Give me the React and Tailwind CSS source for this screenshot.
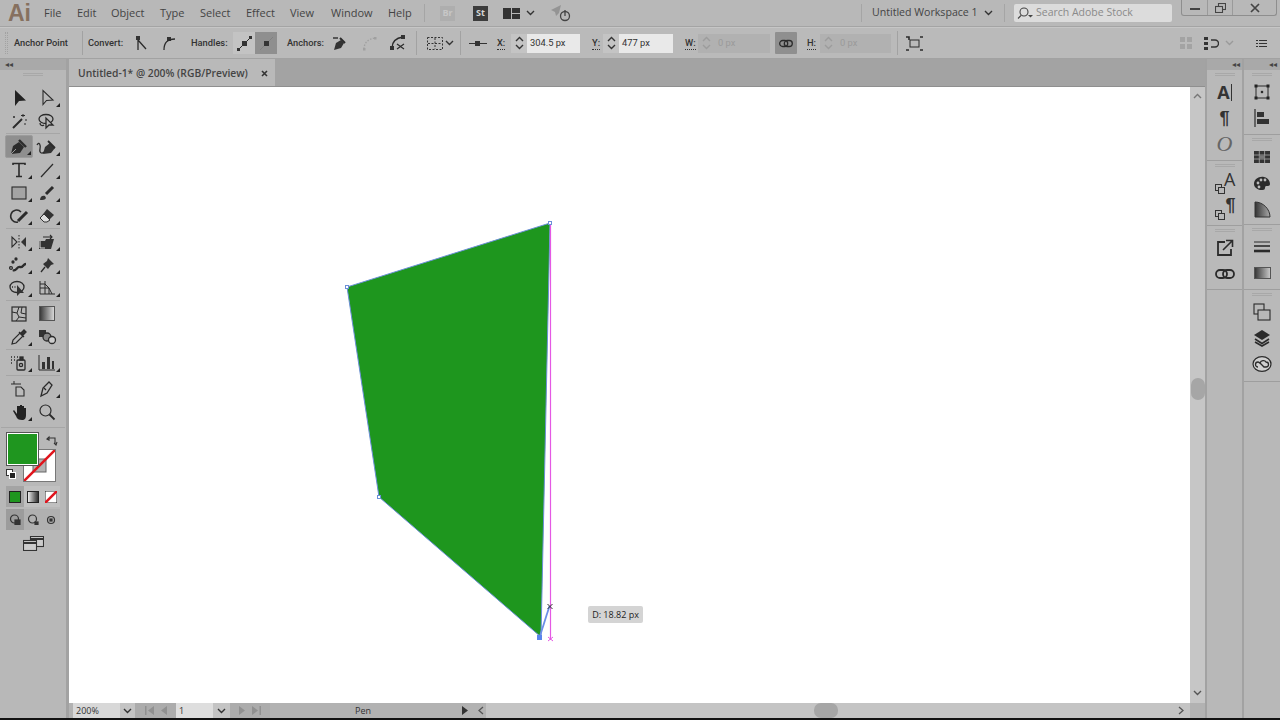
import React from "react";

const S = ({ w = 20, h = 20, vb, children, className = "" }) => (
  <svg width={w} height={h} viewBox={vb || `0 0 ${w} ${h}`} fill="none" stroke="#2b2b2b" strokeWidth="1.3" className={"block shrink-0 " + className}>
    {children}
  </svg>
);
const Chev = ({ c = "#333", w = 9, up = false }) => (
  <svg width={w} height="6" viewBox="0 0 9 6" fill="none" stroke={c} strokeWidth="1.4" className="block shrink-0">
    <path d={up ? "M1 5l3.5-3.5L8 5" : "M1 1l3.5 3.5L8 1"} />
  </svg>
);
const Corner = () => <span className="absolute right-[1px] bottom-[2px] w-0 h-0 border-l-[4px] border-l-transparent border-b-[4px] border-b-[#222]" />;
const Tool = ({ children, corner = true, active = false }) => (
  <div className={"relative w-[28px] h-[23px] flex items-center justify-center " + (active ? "bg-[#8f8f8f] rounded-[2px] border border-[#9c9c9c]" : "")}>
    {children}
    {corner && <Corner />}
  </div>
);
const Row = ({ children }) => <div className="flex justify-center gap-0">{children}</div>;
const Sep = () => <div className="mx-[1px] my-[1px] h-px bg-[#a6a6a6]" />;

const Pen = ({ c = "#2b2b2b" }) => (
  <g>
    <path d="M2 17l2-8 6-4 5 5-4 6-9 1z" fill={c} stroke="none" />
    <path d="M10 3l7 7" stroke={c} strokeWidth="2.4" />
    <path d="M2 17l5-5" stroke="#9a9a9a" strokeWidth="1" />
  </g>
);

const leftTools = [
  [
    [<S w={18} h={18}><path d="M5 1v16l4-5 7-.5z" fill="#222" stroke="none" /></S>, false],
    [<S w={18} h={18}><path d="M5 1.5v14l3.5-4 6.5-.5z" strokeWidth="1.1" /></S>, true],
  ],
  [
    [<S w={18} h={18}><path d="M3 16L12 7" strokeWidth="2" /><path d="M13 2v3M11 3.5h4M16 7v2M4 4v2M3 5h2M15 11v2" strokeWidth="1" /></S>, false],
    [<S w={20} h={18}><ellipse cx="9" cy="7" rx="7" ry="4.5" /><path d="M3 11c0 3 3 3 4 2" /><path d="M9 6v10l3-3 4 0z" fill="#b8b8b8" /></S>, false],
  ],
  "sep",
  [
    [<S w={20} h={20}><Pen /></S>, true, true],
    [<S w={22} h={20}><path d="M7 17l2-7 5-4 5 5-4 5-8 1z" fill="#333" stroke="none" /><path d="M12 4l7 7" strokeWidth="1.8" /><path d="M1 8c2-4 4 0 3 4s2 5 4 3" /></S>, true],
  ],
  [
    [<S w={18} h={18}><path d="M3 4V2.5h12V4M9 2.5v13M6 15.5h6" strokeWidth="1.6" /></S>, true],
    [<S w={18} h={18}><path d="M3 16L15 3" strokeWidth="1.2" /></S>, true],
  ],
  [
    [<S w={18} h={18}><rect x="2" y="3" width="14" height="12" fill="#a4a4a4" strokeWidth="1.1" /></S>, true],
    [<S w={18} h={18}><path d="M2 16c0-4 3-5 5-4l1 2c-1 2-3 2-6 2z" fill="#333" stroke="none" /><path d="M8 10l7-7" strokeWidth="3" /></S>, true],
  ],
  [
    [<S w={22} h={18}><path d="M13 5a6 6 0 1 0-3 10" strokeWidth="1.5" /><path d="M10 14l9-9" strokeWidth="3" /></S>, true],
    [<S w={20} h={18}><path d="M10 2l7 6-7 7H7L3 11z" fill="#333" stroke="none" /><path d="M3 11l4-4 6 6-3 2H7z" fill="#ddd" stroke="#333" strokeWidth="1" /></S>, true],
  ],
  "sep",
  [
    [<S w={20} h={18}><path d="M3 4v10l5-5z" strokeWidth="1.1" /><path d="M17 4v10l-5-5z" fill="#333" stroke="none" /><path d="M10 2v15" strokeDasharray="1.5 1.5" strokeWidth="1" /></S>, true],
    [<S w={20} h={18}><path d="M2 8h6l1-2h8l-3 10H2z" fill="#333" stroke="none" /><path d="M3 8v7h5" stroke="#ddd" strokeWidth="1" /><path d="M6 4h9M13 2l2 2-2 2" strokeWidth="1.1" /></S>, true],
  ],
  [
    [<S w={20} h={18}><path d="M4 14c3 2 4-4 7-3s3-3 6-3" strokeWidth="2.4" /><circle cx="4" cy="6" r="1" fill="#222" /><circle cx="7" cy="3" r="1" fill="#222" /><circle cx="2" cy="12" r="1.4" /></S>, true],
    [<S w={18} h={18}><path d="M10 2l6 6-3 1-3 4-5-5 4-3z" fill="#333" stroke="none" /><path d="M7 11l-4 5" /></S>, true],
  ],
  [
    [<S w={22} h={18}><ellipse cx="9" cy="8" rx="7" ry="5.5" /><path d="M9 6v11l3-3h4z" fill="#333" stroke="none" /><path d="M4 8h1M6.5 8h1" /></S>, true],
    [<S w={20} h={18}><path d="M3 2v13h15M3 5h5l4 4 3 6M8 2v13M3 9h9M12 9v6" strokeWidth="1" /></S>, true],
  ],
  "sep",
  [
    [<S w={18} h={18}><rect x="2" y="2" width="14" height="14" strokeWidth="1.2" /><path d="M2 7l5 1 2-6M7 8l2 4 7 1M9 12l-3 4M12 2l-1 6 5 1" strokeWidth="1" /></S>, false],
    [<svg width="16" height="15" className="block"><defs><linearGradient id="g1" x1="0" x2="1"><stop offset="0" stopColor="#333" /><stop offset="1" stopColor="#ddd" /></linearGradient></defs><rect x=".5" y=".5" width="15" height="14" fill="url(#g1)" stroke="#555" /></svg>, false],
  ],
  [
    [<S w={18} h={18}><path d="M2 16l1-4 7-7 3 3-7 7z" strokeWidth="1.2" /><path d="M9 4l5 5M11 5l3-3 2 2-3 3z" fill="#333" /></S>, true],
    [<S w={20} h={18}><rect x="2" y="2" width="7" height="7" fill="#333" stroke="none" /><circle cx="10" cy="9" r="4" fill="#888" /><circle cx="15" cy="12" r="3.5" fill="#ccc" /></S>, false],
  ],
  "sep",
  [
    [<S w={20} h={20}><path d="M2 4h1M5 4h1M2 7h1M5 7h1M8 4h1M2 10h1" strokeWidth="1.6" /><rect x="8" y="7" width="8" height="10" rx="1" strokeWidth="1.3" /><rect x="11" y="4" width="3" height="3" fill="#333" /><circle cx="12" cy="12" r="1.6" /></S>, true],
    [<S w={20} h={20}><path d="M2 2v15h16" strokeWidth="1" /><path d="M5 16V9h3v7zM10 16V4h3v12zM15 16V8h2v8z" fill="#333" stroke="none" /></S>, true],
  ],
  "sep",
  [
    [<S w={20} h={20}><path d="M2 5h10M5 2v3" strokeWidth="1" /><path d="M7 8h5l3 3v6H7z" fill="#bbb" strokeWidth="1.1" /></S>, false],
    [<S w={20} h={20}><path d="M4 17l2-8 6-6 3 3-5 8z" strokeWidth="1.3" /><path d="M7 9l2 2" /></S>, true],
  ],
  [
    [<S w={20} h={20}><path d="M4 9l3 5c1 3 3 4 6 4s4-2 4-5V6l-2 0v4-6h-2v6V3h-2v7V4H8v8L5 8z" fill="#222" stroke="none" /></S>, true],
    [<S w={18} h={18}><circle cx="7.5" cy="7.5" r="5.5" strokeWidth="1.2" /><path d="M11.5 11.5L16.5 16.5" strokeWidth="1.8" /></S>, false],
  ],
];

const rI = {
  A: <span className="font-['Open_Sans',sans-serif] font-bold text-[18px] leading-none text-[#333] flex items-center">A<span className="ml-[1px] w-px h-[17px] bg-[#333]" /></span>,
  P: <span className="font-['Liberation_Sans',sans-serif] font-bold text-[18px] leading-none text-[#333]">¶</span>,
  O: <span className="font-['Liberation_Serif',serif] italic text-[22px] leading-none text-[#666]">O</span>,
  SA: <span className="relative w-[20px] h-[20px] block"><span className="absolute right-[-1px] top-[-3px] font-['Open_Sans',sans-serif] text-[18px] leading-none text-[#333]">A</span><span className="absolute left-0 bottom-[2px] w-[7px] h-[7px] border border-[#333]" /><span className="absolute left-[3px] bottom-[-1px] w-[7px] h-[7px] border border-[#333] bg-[#b8b8b8]" /></span>,
  SP: <span className="relative w-[20px] h-[20px] block"><span className="absolute right-[-1px] top-[-3px] font-['Liberation_Sans',sans-serif] font-bold text-[18px] leading-none text-[#333]">¶</span><span className="absolute left-0 bottom-[2px] w-[7px] h-[7px] border border-[#333]" /><span className="absolute left-[3px] bottom-[-1px] w-[7px] h-[7px] border border-[#333] bg-[#b8b8b8]" /></span>,
  Ext: <S w={20} h={20}><path d="M10 4H3v13h13v-6" strokeWidth="1.8" /><path d="M8 12l9-9M11 2.5h6.5V9" strokeWidth="1.6" /></S>,
  Link: <S w={20} h={14}><rect x="1" y="3" width="11" height="8" rx="4" strokeWidth="1.8" /><rect x="8" y="3" width="11" height="8" rx="4" strokeWidth="1.8" /></S>,
  Tr: <S w={18} h={18}><rect x="3" y="3" width="12" height="12" strokeWidth="1" /><path d="M1.5 1.5h3v3h-3zM13.5 1.5h3v3h-3zM1.5 13.5h3v3h-3zM13.5 13.5h3v3h-3z" fill="#222" stroke="none" /><rect x="8.5" y="8.5" width="1" height="1" fill="#222" /></S>,
  Al: <S w={18} h={20}><path d="M2 1v18" strokeWidth="1.2" /><path d="M4 4h7v5H4zM4 11h12v5H4z" fill="#333" stroke="none" /></S>,
  Sw: <S w={16} h={12}><path d="M0 0h16v12H0z" fill="#333" stroke="none" /><path d="M5.3 0v12M10.6 0v12M0 4h16M0 8h16" stroke="#aaa" strokeWidth=".8" /><rect x="5.5" y="4.3" width="5" height="3.5" fill="#777" stroke="none" /></S>,
  Pal: <S w={18} h={16}><path d="M1 9c0-5 5-8 10-7s6 5 6 7-2 2-3 2-2 0-2 2-2 2-4 2-7-2-7-6z" fill="#2b2b2b" stroke="none" /><circle cx="5" cy="8" r="1.4" fill="#bbb" stroke="none" /><circle cx="8" cy="5" r="1.4" fill="#bbb" stroke="none" /><circle cx="12" cy="5" r="1.4" fill="#bbb" stroke="none" /><circle cx="6" cy="12" r="1.4" fill="#bbb" stroke="none" /></S>,
  Ap: <svg width="17" height="17" className="block"><defs><linearGradient id="g2" x1="0" x2="1"><stop offset="0" stopColor="#333" /><stop offset="1" stopColor="#aaa" /></linearGradient></defs><path d="M1 1c8 0 15 7 15 15H1z" fill="url(#g2)" stroke="#333" /></svg>,
  Lines: <S w={18} h={14}><path d="M1 2h16" strokeWidth="1" /><path d="M1 6h16" strokeWidth="1.6" /><path d="M1 11h16" strokeWidth="2.6" /></S>,
  Grad: <svg width="17" height="12" className="block"><defs><linearGradient id="g3" x1="0" x2="1"><stop offset="0" stopColor="#333" /><stop offset="1" stopColor="#ccc" /></linearGradient></defs><rect x=".5" y=".5" width="16" height="11" fill="url(#g3)" stroke="#555" /></svg>,
  Cop: <S w={18} h={18}><rect x="1" y="1" width="10" height="10" strokeWidth="1.1" /><rect x="5" y="7" width="12" height="10" fill="#b8b8b8" strokeWidth="1.1" /></S>,
  Lay: <S w={18} h={18}><path d="M9 1l8 5-8 5-8-5z" fill="#2b2b2b" stroke="none" /><path d="M2 10l7 4.5L16 10M2 13l7 4 7-4" strokeWidth="1.6" /></S>,
  CC: <S w={20} h={16}><ellipse cx="10" cy="8" rx="9" ry="7.3" fill="#d0d0d0" strokeWidth="1.2" /><path d="M6 11a2.5 2.5 0 0 1 0-5c1 0 2 1 4 3l2 2h2a2.5 2.5 0 0 0 0-5c-1-2-5-2-6 1" strokeWidth="1.3" /></S>,
};

const RIcon = ({ children }) => <div className="flex items-center justify-center w-full h-[26px]">{children}</div>;
const Grip = () => <div className="mx-auto mt-[3px] w-[20px] h-[3px] border-y border-[#a2a2a2] opacity-70" />;
const Panel = ({ h, items }) => (
  <div className="bg-[#b9b9b9] border-b border-[#9e9e9e] shrink-0" style={{ height: h }}>
    <Grip />
    <div className="mt-[3px] flex flex-col">{items.map((it, i) => <RIcon key={i}>{it}</RIcon>)}</div>
  </div>
);

const Lbl = ({ children, ml = 0, w }) => (
  <span className="text-[9.3px] font-medium font-['Roboto',sans-serif] text-[#333] whitespace-nowrap shrink-0" style={{ marginLeft: ml, width: w }}>{children}</span>
);
const VSep = ({ ml, h = 28 }) => <span className="w-px bg-[#a2a2a2] shrink-0" style={{ marginLeft: ml, height: h }} />;
const Slot = ({ ml = 0, w = 20, children, cls = "" }) => (
  <span className={"flex items-center justify-center shrink-0 " + cls} style={{ marginLeft: ml, width: w }}>{children}</span>
);
const Spin = ({ fade }) => (
  <span className={"w-[16px] h-[19px] flex flex-col items-center justify-center gap-[2px] shrink-0 " + (fade ? "" : "bg-[#c4c4c4]")}>
    <Chev c={fade ? "#9c9c9c" : "#333"} up />
    <Chev c={fade ? "#9c9c9c" : "#333"} />
  </span>
);
const Field = ({ w, val }) => (
  <span className="flex items-center h-[19px] bg-[#e9e9e9] text-[9.3px] font-['Roboto',sans-serif] text-[#333] pl-[3px] shrink-0" style={{ width: w }}>{val}</span>
);
const Dis = ({ w }) => (
  <span className="flex items-center h-[19px] bg-[#b1b1b1] shrink-0" style={{ width: w }}>
    <Spin fade />
    <span className="text-[9.3px] font-['Roboto',sans-serif] text-[#9a9a9a] ml-[4px]">0 px</span>
  </span>
);
const UL = ({ children, ml, w }) => (
  <span className="text-[9.3px] font-medium font-['Roboto',sans-serif] text-[#333] shrink-0 flex" style={{ marginLeft: ml, width: w }}>
    <span className="border-b border-dotted border-[#333] leading-[12px]">{children}</span>
  </span>
);

export default function App() {
  return (
    <div className="w-[1280px] h-[720px] overflow-hidden flex flex-col bg-[#b8b8b8] font-['Open_Sans',sans-serif] text-[#3a3a3a]">
      {/* menu */}
      <div className="h-[27px] shrink-0 flex items-start border-b border-[#a4a4a4] relative">
        <span className="w-[44px] pl-[8px] h-[26px] flex items-center text-[23px] font-bold text-[#86705f] leading-none font-['Liberation_Sans',sans-serif]">Ai</span>
        <div className="flex items-center h-[26px] text-[11px] text-[#444]">
          <span className="w-[33px]">File</span>
          <span className="w-[34px]">Edit</span>
          <span className="w-[49px]">Object</span>
          <span className="w-[40px]">Type</span>
          <span className="w-[46px]">Select</span>
          <span className="w-[44px]">Effect</span>
          <span className="w-[41px]">View</span>
          <span className="w-[57px]">Window</span>
          <span className="w-[36px]">Help</span>
        </div>
        <div className="flex items-center h-[26px]">
          <span className="w-px h-[18px] bg-[#a5a5a5]" />
          <span className="ml-[15px] w-[15px] h-[15px] bg-[#aeaeae] text-[#c7c7c7] text-[9px] font-bold flex items-center justify-center">Br</span>
          <span className="ml-[18px] w-[15px] h-[15px] bg-[#3c3c3c] text-[#d6d6d6] text-[9px] font-bold flex items-center justify-center">St</span>
          <svg width="17" height="11" className="ml-[15px] block"><rect width="8" height="11" fill="#333" /><rect x="9" width="8" height="5" fill="#333" /><rect x="9" y="6" width="8" height="5" fill="#333" /></svg>
          <span className="ml-[6px]"><Chev /></span>
          <svg width="21" height="18" viewBox="0 0 21 18" className="ml-[15px] block" fill="none"><path d="M1 6l10-5-2 8-3 3-1-4z" fill="#949494" /><circle cx="15" cy="12" r="4.5" stroke="#444" strokeWidth="1.3" /><path d="M15 6v6" stroke="#444" strokeWidth="1.3" /></svg>
        </div>
        <div className="ml-auto flex items-center h-[26px]">
          <span className="w-px h-[18px] bg-[#a5a5a5]" />
          <span className="ml-[10px] text-[10.6px] text-[#444] w-[110px]">Untitled Workspace 1</span>
          <span className="ml-[2px]"><Chev /></span>
          <span className="ml-[11px] w-px h-[18px] bg-[#a5a5a5]" />
          <div className="ml-[9px] mb-[1px] w-[158px] h-[18px] bg-[#dcdcdc] rounded-[2px] flex items-center pl-[3px] text-[10.5px] text-[#8a8a8a]">
            <svg width="16" height="12" viewBox="0 0 16 12" fill="none" stroke="#444" strokeWidth="1.1" className="block"><circle cx="7" cy="5" r="4" /><path d="M4 8.5L1 11.5" /><path d="M11 8l2.5 2.5L16 8z" fill="#444" stroke="none" /></svg>
            <span className="ml-[3px]">Search Adobe Stock</span>
          </div>
        </div>
        <div className="ml-[9px] mr-[3px] h-[16px] flex border border-t-0 border-[#8e8e8e] rounded-b-[3px]">
          <span className="w-[26px] flex items-center justify-center border-r border-[#9a9a9a]"><span className="block w-[10px] h-[2px] mt-[3px] bg-[#444]" /></span>
          <span className="w-[25px] flex items-center justify-center border-r border-[#9a9a9a]"><svg width="11" height="10" fill="none" stroke="#444" strokeWidth="1.1" className="block"><rect x="3.5" y=".5" width="7" height="6" /><rect x=".5" y="3.5" width="7" height="6" fill="#b8b8b8" /></svg></span>
          <span className="w-[43px] flex items-center justify-center"><svg width="10" height="10" stroke="#444" strokeWidth="1.7" className="block"><path d="M1 1l8 8M9 1l-8 8" /></svg></span>
        </div>
      </div>

      {/* control bar */}
      <div className="h-[32px] shrink-0 flex items-center border-t border-[#c6c6c6] border-b border-b-[#a2a2a2] bg-[#bababa]">
        <span className="ml-[5px] w-[3px] h-[22px] border-x border-dotted border-[#a2a2a2] shrink-0" />
        <Lbl ml={6} w={68}>Anchor Point</Lbl>
        <VSep ml={0} h={24} />
        <Lbl ml={5} w={36}>Convert:</Lbl>
        <Slot ml={7} w={20}>
          <S w={14} h={16}><rect x="2" y="1" width="4" height="4" fill="#333" stroke="none" /><path d="M4 5v10M4 5l8 9" /></S>
        </Slot>
        <Slot ml={8} w={20}>
          <S w={14} h={16}><rect x="5" y="2" width="4" height="4" fill="#333" stroke="none" /><path d="M2 15c0-7 3-11 11-11" /></S>
        </Slot>
        <Lbl ml={12} w={37}>Handles:</Lbl>
        <span className="ml-[5px] flex h-[22px] shrink-0 bg-[#c3c3c3]">
          <span className="w-[22px] flex items-center justify-center"><S w={15} h={15}><path d="M1 14L14 1" strokeWidth="1" /><rect x="5" y="5" width="5" height="5" fill="#333" stroke="none" /><rect x="0" y="12" width="3" height="3" fill="#333" stroke="none" /><rect x="12" y="0" width="3" height="3" fill="#333" stroke="none" /></S></span>
          <span className="w-[22px] flex items-center justify-center bg-[#8f8f8f]"><S w={15} h={15}><path d="M1 14L14 1" strokeWidth=".6" stroke="#777" /><rect x="5" y="5" width="5" height="5" fill="#333" stroke="none" /></S></span>
        </span>
        <Lbl ml={10} w={36}>Anchors:</Lbl>
        <Slot ml={6} w={20}><S w={17} h={17}><path d="M3 15l2-7 5-3 3 3-3 5z" fill="#333" stroke="none" /><path d="M9 3l5 5" strokeWidth="2" /><path d="M2 3h5" strokeWidth="1.4" /></S></Slot>
        <Slot ml={10} w={20}><S w={15} h={15}><path d="M2 13c0-6 4-10 11-11" stroke="#a0a0a0" strokeDasharray="1.5 1.5" /><rect x="1" y="12" width="2.5" height="2.5" fill="#a0a0a0" stroke="none" /><rect x="12" y="1" width="2.5" height="2.5" fill="#a0a0a0" stroke="none" /></S></Slot>
        <Slot ml={9} w={20}><S w={16} h={16}><path d="M2 13c0-6 4-10 11-11" /><rect x="0" y="11" width="4" height="4" fill="#333" stroke="none" /><rect x="11" y="0" width="4" height="4" fill="#333" stroke="none" /><path d="M7 9l7 5M7 14l7-5" strokeWidth="1.2" /></S></Slot>
        <VSep ml={8} h={24} />
        <Slot ml={10} w={16}><svg width="16" height="13" fill="none" stroke="#333" strokeDasharray="2 1.5" className="block"><rect x=".5" y=".5" width="15" height="12" /><path d="M8 1v11M1 6.5h14" /></svg></Slot>
        <span className="ml-[2px]"><Chev /></span>
        <VSep ml={6} h={24} />
        <Slot ml={8} w={18}><svg width="18" height="7" className="block"><path d="M0 3.5h18" stroke="#333" /><rect x="6" y="1" width="5" height="5" fill="#333" /></svg></Slot>
        <UL ml={10} w={14}>X:</UL>
        <Spin />
        <Field w={53} val="304.5 px" />
        <UL ml={12} w={11}>Y:</UL>
        <Spin />
        <Field w={54} val="477 px" />
        <UL ml={12} w={13}>W:</UL>
        <Dis w={72} />
        <span className="ml-[5px] w-[22px] h-[22px] bg-[#8f8f8f] rounded-[1px] flex items-center justify-center shrink-0"><S w={14} h={9}><rect x=".7" y="1.5" width="8" height="6" rx="3" strokeWidth="1.3" /><rect x="5.3" y="1.5" width="8" height="6" rx="3" strokeWidth="1.3" /></S></span>
        <UL ml={10} w={13}>H:</UL>
        <Dis w={71} />
        <VSep ml={6} h={24} />
        <Slot ml={7} w={18}><S w={17} h={15}><rect x="4" y="4" width="9" height="7" strokeWidth="1" /><path d="M0 1h3v3M14 1h3M0 14h3M14 14h3" strokeWidth="1.6" /></S></Slot>
        <span className="ml-auto flex items-center">
          <svg width="12" height="12" className="block" fill="#a3a3a3"><rect width="5" height="5" /><rect x="7" width="5" height="5" /><rect y="7" width="5" height="5" /><rect x="7" y="7" width="5" height="5" /></svg>
          <svg width="15" height="13" className="block ml-[12px]" fill="none" stroke="#333" strokeWidth="1.4"><path d="M0 0h4v3H0zM0 5h4v3H0zM0 10h4v3H0z" fill="#333" stroke="none" /><path d="M7 3h4a3.5 3.5 0 0 1 0 7H7" /></svg>
          <span className="ml-[6px]"><Chev c="#9a9a9a" /></span>
          <svg width="11" height="9" className="block ml-[22px] mr-[13px]" stroke="#333"><path d="M3 1.5h8M3 4.5h8M3 7.5h8" /><path d="M0 1.5h2M0 4.5h2M0 7.5h2" /></svg>
        </span>
      </div>

      {/* main */}
      <div className="flex-1 min-h-0 flex">
        {/* left tools */}
        <div className="w-[66px] shrink-0 flex flex-col bg-[#b8b8b8]">
          <div className="h-[11px] bg-[#a9a9a9] text-[8px] leading-[10px] pl-[5px] text-[#444]">◂◂</div>
          <div className="mx-auto mt-[3px] w-[20px] h-[3px] border-y border-[#a2a2a2] opacity-70" />
          <div className="mt-[10px] px-[5px] flex flex-col">
            {leftTools.map((r, i) =>
              r === "sep" ? (
                <Sep key={i} />
              ) : (
                <Row key={i}>
                  {r.map(([ic, c, a], j) => (
                    <Tool key={j} corner={c} active={a}>
                      {ic}
                    </Tool>
                  ))}
                </Row>
              )
            )}
          </div>
          <div className="mt-[3px]"><Sep /></div>
          {/* colors */}
          <div className="relative mt-[3px] h-[50px] shrink-0">
            <div className="absolute left-[23px] top-[17px] w-[33px] h-[33px] bg-white border border-[#777]">
              <svg width="31" height="31" className="block"><rect x="9" y="9" width="13" height="13" fill="#b4b4b4" stroke="#666" /><path d="M0 31L31 0" stroke="#e0141c" strokeWidth="2.5" /></svg>
            </div>
            <div className="absolute left-[7px] top-[1px] w-[31px] h-[32px] bg-[#1f961f] border border-white outline outline-1 outline-[#555]" />
            <svg width="12" height="12" viewBox="0 0 12 12" fill="none" stroke="#333" strokeWidth="1.1" className="absolute left-[46px] top-[2px] block"><path d="M2 4h7v6M1 5l2-2 0 3zM8 9l2 2 1-3" /></svg>
            <span className="absolute left-[6px] top-[37px] w-[7px] h-[7px] bg-white border border-[#333]" />
            <span className="absolute left-[9px] top-[40px] w-[7px] h-[7px] bg-[#222] border border-white" />
          </div>
          <div className="mt-[4px] mx-[6px] h-[21px] flex shrink-0 bg-[#c0c0c0]">
            <span className="flex-1 flex items-center justify-center bg-[#a4a4a4]"><span className="block w-[12px] h-[12px] bg-[#1f961f] border border-[#222]" /></span>
            <span className="flex-1 flex items-center justify-center"><span className="block w-[12px] h-[12px] bg-gradient-to-r from-[#eee] to-[#333] border border-[#222]" /></span>
            <span className="flex-1 flex items-center justify-center"><svg width="12" height="12" className="block"><rect width="12" height="12" fill="#fff" stroke="#222" /><path d="M0 12L12 0" stroke="#e0141c" strokeWidth="2.5" /></svg></span>
          </div>
          <div className="mt-[2px] mx-[6px] h-[21px] flex shrink-0 bg-[#b0b0b0]">
            <span className="flex-1 flex items-center justify-center bg-[#9c9c9c]"><svg width="12" height="11" fill="none" stroke="#333" strokeWidth="1.2" className="block"><circle cx="5.5" cy="5" r="4" /><rect x="6" y="6" width="5" height="5" fill="#333" /></svg></span>
            <span className="flex-1 flex items-center justify-center"><svg width="12" height="11" fill="none" stroke="#333" strokeWidth="1.2" className="block"><circle cx="5.5" cy="5" r="4" /><rect x="8" y="8" width="3" height="3" fill="#333" /></svg></span>
            <span className="flex-1 flex items-center justify-center"><svg width="10" height="10" fill="none" stroke="#333" strokeWidth="1.2" className="block"><circle cx="5" cy="5" r="3.5" /><rect x="4" y="4" width="2" height="2" fill="#333" /></svg></span>
          </div>
          <div className="mt-[6px] flex justify-center">
            <svg width="21" height="15" fill="none" stroke="#333" strokeWidth="1.1" className="block"><rect x="7.5" y=".5" width="13" height="10" fill="#ccc" /><path d="M7.5 3h13" strokeWidth="2" /><rect x=".5" y="4.5" width="13" height="10" fill="#ccc" /><path d="M.5 7h13" strokeWidth="2" /></svg>
          </div>
        </div>
        <div className="w-[3px] shrink-0 bg-[#a2a2a2]" />

        {/* center */}
        <div className="flex-1 min-w-0 flex flex-col">
          {/* tabs */}
          <div className="h-[28px] shrink-0 flex items-end bg-[#a3a3a3] border-b border-[#8f8f8f]">
            <div className="w-[206px] h-[27px] bg-[#b9b9b9] flex items-center pt-[2px] pl-[9px] pr-[7px] justify-between text-[10.3px] font-semibold text-[#444]">
              <span>Untitled-1* @ 200% (RGB/Preview)</span>
              <svg width="7" height="7" stroke="#333" strokeWidth="1.6" className="block"><path d="M1 1l5 5M6 1L1 6" /></svg>
            </div>
          </div>
          <div className="flex-1 min-h-0 flex">
            {/* canvas */}
            <div className="relative flex-1 min-w-0 bg-white overflow-hidden">
              <svg width="1121" height="616" viewBox="69 87 1121 616" className="absolute left-0 top-0 block">
                <polygon points="347,287 550,223 541,637 379,497" fill="#1e961e" stroke="#6c8fd8" strokeWidth="1" />
                <path d="M550.5 223V640" stroke="#e458e4" strokeWidth="1.2" />
                <path d="M540 636L549.5 606" stroke="#6c8ee8" strokeWidth="1.8" />
                <rect x="537" y="635" width="5" height="5" fill="#5a84ec" />
                <rect x="345.5" y="285.5" width="3" height="3" fill="#fff" stroke="#6c8fd8" />
                <rect x="548.5" y="221.5" width="3" height="3" fill="#fff" stroke="#6c8fd8" />
                <rect x="377.5" y="495.5" width="3" height="3" fill="#fff" stroke="#6c8fd8" />
                <path d="M548 637l5 4M553 637l-5 4" stroke="#e458e4" />
                <path d="M547.5 604l5 5M552.5 604l-5 5" stroke="#333" />
              </svg>
              <div className="absolute left-[519px] top-[519px] w-[55px] h-[17px] rounded-[2px] bg-[#d4d4d4] flex items-center justify-center text-[9px] text-[#222] whitespace-nowrap">D: 18.82 px</div>
            </div>
            {/* v scroll */}
            <div className="w-[15px] shrink-0 bg-[#c6c6c6] flex flex-col items-center py-[6px]">
              <Chev c="#777" up />
              <div className="mt-[279px] w-[14px] h-[22px] rounded-[7px] bg-[#a6a6a6]" />
              <div className="mt-auto mb-[1px]"><Chev c="#555" /></div>
            </div>
          </div>
          {/* status */}
          <div className="h-[15px] shrink-0 flex items-center bg-[#b2b2b2] text-[9px] text-[#333]">
            <span className="ml-[4px] w-[47px] h-full bg-[#d8d8d8] pl-[3px] flex items-center shrink-0">200%</span>
            <span className="w-[15px] h-full bg-[#c4c4c4] flex items-center justify-center shrink-0"><Chev /></span>
            <span className="w-[41px] h-full bg-[#acacac] flex items-center justify-center gap-[7px] shrink-0">
              <svg width="9" height="9" fill="#909090" className="block"><path d="M0 0h1.5v9H0zM9 0v9L3 4.5z" /></svg>
              <svg width="6" height="9" fill="#909090" className="block"><path d="M6 0v9L0 4.5z" /></svg>
            </span>
            <span className="w-[37px] h-full bg-[#dedede] pl-[3px] flex items-center shrink-0">1</span>
            <span className="w-[17px] h-full bg-[#c4c4c4] flex items-center justify-center shrink-0"><Chev /></span>
            <span className="w-[40px] h-full bg-[#acacac] flex items-center justify-center gap-[7px] shrink-0">
              <svg width="6" height="9" fill="#909090" className="block"><path d="M0 0v9l6-4.5z" /></svg>
              <svg width="9" height="9" fill="#909090" className="block"><path d="M7.5 0H9v9H7.5zM0 0v9l6-4.5z" /></svg>
            </span>
            <span className="w-[192px] text-center pr-[6px] shrink-0">Pen</span>
            <svg width="6" height="9" fill="#333" className="block shrink-0"><path d="M0 0v9l6-4.5z" /></svg>
            <span className="ml-[8px] w-[10px] flex justify-center shrink-0"><svg width="6" height="9" fill="none" stroke="#555" strokeWidth="1.3" className="block"><path d="M5 1L1 4.5 5 8" /></svg></span>
            <div className="flex-1 h-full bg-[#c4c4c4] flex items-center">
              <div className="ml-[328px] w-[24px] h-full rounded-[7px] bg-[#a6a6a6]" />
              <svg width="6" height="9" fill="none" stroke="#555" strokeWidth="1.3" className="block ml-auto mr-[6px]"><path d="M1 1l4 3.5L1 8" /></svg>
            </div>
            <span className="w-[15px] h-full bg-[#b2b2b2] shrink-0" />
          </div>
        </div>

        {/* right panels */}
        <div className="w-[2px] shrink-0 bg-[#a2a2a2]" />
        <div className="w-[35px] shrink-0 flex flex-col">
          <div className="h-[11px] shrink-0 bg-[#a9a9a9] text-[8px] leading-[10px] text-right pr-[2px] text-[#444]">◂◂</div>
          <Panel h={91} items={[rI.A, rI.P, rI.O]} />
          <Panel h={65} items={[rI.SA, rI.SP]} />
          <Panel h={64} items={[rI.Ext, rI.Link]} />
          <div className="flex-1" />
        </div>
        <div className="w-[2px] shrink-0 bg-[#a2a2a2]" />
        <div className="w-[36px] shrink-0 flex flex-col">
          <div className="h-[11px] shrink-0 bg-[#a9a9a9] text-[8px] leading-[10px] text-right pr-[3px] text-[#444]">◂◂</div>
          <Panel h={65} items={[rI.Tr, rI.Al]} />
          <Panel h={90} items={[rI.Sw, rI.Pal, rI.Ap]} />
          <Panel h={65} items={[rI.Lines, rI.Grad]} />
          <Panel h={92} items={[rI.Cop, rI.Lay, rI.CC]} />
          <div className="flex-1" />
        </div>
      </div>
      <div className="h-[2px] shrink-0 bg-[#111]" />
    </div>
  );
}
